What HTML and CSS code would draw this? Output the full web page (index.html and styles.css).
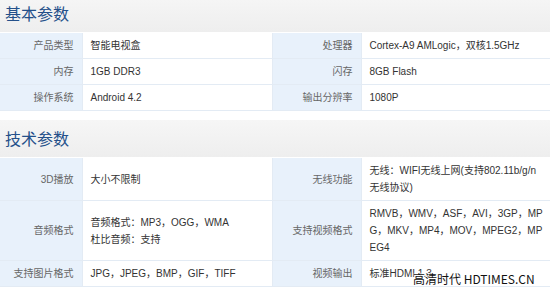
FILE: index.html
```html
<!DOCTYPE html>
<html lang="zh-CN">
<head>
<meta charset="utf-8">
<link rel="stylesheet" href="styles.css">
</head>
<body>
<div class="page">
  <h2 class="sec-title first">基本参数</h2>
  <table class="spec">
    <colgroup><col class="c1"><col class="c2"><col class="c3"><col class="c4"></colgroup>
    <tr><th>产品类型</th><td>智能电视盒</td><th>处理器</th><td>Cortex-A9 AMLogic，双核1.5GHz</td></tr>
    <tr><th>内存</th><td>1GB DDR3</td><th>闪存</th><td>8GB Flash</td></tr>
    <tr><th>操作系统</th><td>Android 4.2</td><th>输出分辨率</th><td>1080P</td></tr>
  </table>
  <h2 class="sec-title">技术参数</h2>
  <table class="spec">
    <colgroup><col class="c1"><col class="c2"><col class="c3"><col class="c4"></colgroup>
    <tr><th>3D播放</th><td>大小不限制</td><th>无线功能</th><td>无线：WIFI无线上网(支持802.11b/g/n<br>无线协议)</td></tr>
    <tr><th>音频格式</th><td>音频格式：MP3，OGG，WMA<br>杜比音频：支持</td><th>支持视频格式</th><td>RMVB，WMV，ASF，AVI，3GP，MP<br>G，MKV，MP4，MOV，MPEG2，MP<br>EG4</td></tr>
    <tr><th>支持图片格式</th><td>JPG，JPEG，BMP，GIF，TIFF</td><th>视频输出</th><td>标准HDMI 1.3</td></tr>
  </table>
  <div class="watermark">高清时代 HDTIMES.CN</div>
</div>
</body>
</html>
```

FILE: styles.css
```css
html, body {
  margin: 0;
  padding: 0;
  background: #fff;
}
.page {
  position: relative;
  width: 550px;
  height: 287px;
  overflow: hidden;
  font-family: "Liberation Sans", Arial, "Noto Sans CJK SC", sans-serif;
  font-size: 10px;
  color: #333;
}
.sec-title {
  margin: 9px 0 1px;
  height: 37px;
  line-height: 37px;
  padding: 0 0 0 5px;
  font-family: "Noto Sans CJK SC", sans-serif;
  font-size: 16px;
  font-weight: normal;
  color: #24508a;
  background: linear-gradient(#f6f6f6, #eeeeee);
  box-sizing: border-box;
}
.sec-title.first {
  margin-top: -5px;
}
.spec {
  width: 550px;
  border-collapse: collapse;
  table-layout: fixed;
}
.c1 { width: 82px; }
.c2 { width: 190px; }
.c3 { width: 89px; }
.c4 { width: 189px; }
.spec th, .spec td {
  border: 1px solid #e3ebf4;
  padding: 4px 0 4px 8px;
  line-height: 17px;
  vertical-align: middle;
}
.spec tr:first-child th, .spec tr:first-child td { border-top: 0; }
.spec th {
  background: #e8f1fb;
  color: #666;
  font-weight: normal;
  text-align: right;
  padding: 4px 8px 4px 0;
}
.spec td {
  background: #fff;
  color: #333;
  white-space: nowrap;
}
.spec td:last-child { border-right: 0; }
.spec th:first-child { border-left: 0; }
.watermark {
  position: absolute;
  left: 413px;
  top: 271px;
  font-family: "Noto Sans CJK SC", sans-serif;
  font-size: 12px;
  line-height: 16px;
  color: #111;
  text-shadow: 0 0 2px #fff, 0 0 2px #fff, 0 0 2px #fff;
  white-space: nowrap;
}
```
